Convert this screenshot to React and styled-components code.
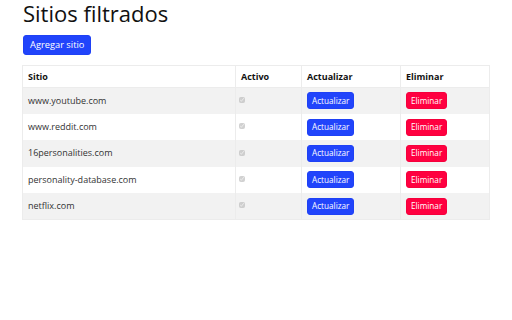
import React from "react";
import styled, { createGlobalStyle } from "styled-components";

const Global = createGlobalStyle`
  html, body { margin: 0; padding: 0; background: #fff; }
  body { font-family: "Open Sans", "Noto Sans", sans-serif; color: #212529; }
`;

const Page = styled.div`
  padding: 0 23px 0 22px;
`;

const Title = styled.h1`
  margin: 0;
  padding: 0 0 0 1px;
  font-size: 22px;
  font-weight: 400;
  line-height: 27px;
  color: #111;
`;

const Button = styled.button`
  font-family: inherit;
  border: 1px solid ${(p) => (p.$variant === "danger" ? "#f5003c" : "#1f41f5")};
  background: ${(p) => (p.$variant === "danger" ? "#ff0040" : "#2144fb")};
  color: #fff;
  border-radius: 3px;
  cursor: pointer;
  padding: 0 ${(p) => (p.$small ? "4px" : "6px")};
  height: ${(p) => (p.$small ? "17px" : "20px")};
  font-size: ${(p) => (p.$small ? "8.2px" : "9.3px")};
  line-height: 1;
  display: inline-flex;
  align-items: center;
  vertical-align: middle;
`;

const AddButton = styled(Button)`
  margin: 8px 0 10px 1px;
`;

const Table = styled.table`
  border-collapse: collapse;
  width: 467px;
  table-layout: fixed;
  font-size: 9px;
  border: 1px solid #ececec;
`;

const HeadRow = styled.tr`
  height: 22px;
`;

const Th = styled.th`
  text-align: left;
  font-weight: 700;
  padding: 0 5px;
  line-height: 14px;
  border: 1px solid #ececec;
  color: #111;
`;

const Row = styled.tr`
  height: 26.4px;
  background: ${(p) => (p.$striped ? "#f2f2f2" : "#fff")};
`;

const Td = styled.td`
  padding: 0 5px;
  line-height: 14px;
  vertical-align: middle;
  border-left: 1px solid #ececec;
  border-right: 1px solid #ececec;
  color: #333;
`;

const Check = styled.input`
  width: 6px;
  height: 6px;
  margin: 0 0 3px -2px;
  vertical-align: middle;
`;

const sites = [
  "www.youtube.com",
  "www.reddit.com",
  "16personalities.com",
  "personality-database.com",
  "netflix.com",
];

export default function App() {
  return (
    <>
      <Global />
      <Page>
        <Title>Sitios filtrados</Title>
        <AddButton>Agregar sitio</AddButton>
        <Table>
          <colgroup>
            <col style={{ width: 213 }} />
            <col style={{ width: 66 }} />
            <col style={{ width: 99 }} />
            <col style={{ width: 89 }} />
          </colgroup>
          <thead>
            <HeadRow>
              <Th>Sitio</Th>
              <Th>Activo</Th>
              <Th>Actualizar</Th>
              <Th>Eliminar</Th>
            </HeadRow>
          </thead>
          <tbody>
            {sites.map((s, i) => (
              <Row key={s} $striped={i % 2 === 0}>
                <Td>{s}</Td>
                <Td>
                  <Check type="checkbox" checked disabled readOnly />
                </Td>
                <Td>
                  <Button $small>Actualizar</Button>
                </Td>
                <Td>
                  <Button $small $variant="danger">Eliminar</Button>
                </Td>
              </Row>
            ))}
          </tbody>
        </Table>
      </Page>
    </>
  );
}
